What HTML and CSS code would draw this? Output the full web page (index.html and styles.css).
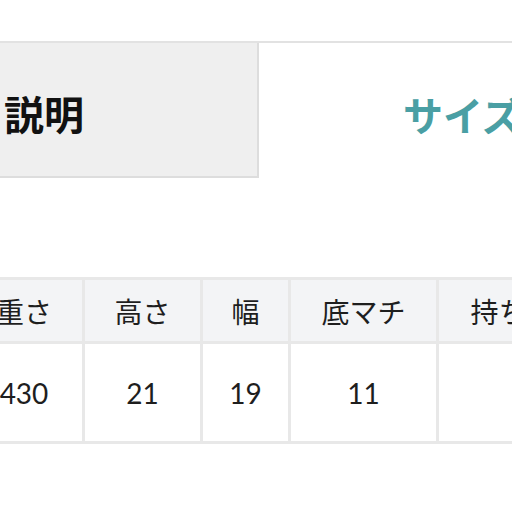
FILE: index.html
```html
<!DOCTYPE html>
<html lang="ja">
<head>
<meta charset="utf-8">
<link rel="stylesheet" href="styles.css">
</head>
<body>
<div class="page">
  <div class="tabs">
    <div class="tab tab-inactive"><span class="tab-label">説明</span></div>
    <div class="tab tab-active"><span class="tab-label">サイズ</span></div>
  </div>
  <table class="spec">
    <colgroup>
      <col class="c1"><col class="c2"><col class="c3"><col class="c4"><col class="c5">
    </colgroup>
    <thead>
      <tr><th>重さ</th><th>高さ</th><th>幅</th><th>底マチ</th><th>持ち手</th></tr>
    </thead>
    <tbody>
      <tr><td>430</td><td>21</td><td>19</td><td>11</td><td></td></tr>
    </tbody>
  </table>
</div>
</body>
</html>
```
FILE: styles.css
```css
html, body {
  margin: 0;
  padding: 0;
  background: #ffffff;
}
.page {
  width: 512px;
  height: 512px;
  overflow: hidden;
  font-family: Lato, "Noto Sans CJK JP", sans-serif;
  color: #222222;
}
.tabs {
  margin-top: 41px;
  display: flex;
  border-top: 2px solid #e2e2e2;
  height: 135px;
  width: 600px;
}
.tab {
  display: flex;
  align-items: center;
  box-sizing: border-box;
  white-space: nowrap;
}
.tab-inactive {
  width: 259px;
  background: #efefef;
  border-right: 2px solid #dddddd;
  border-bottom: 2px solid #dddddd;
  padding-left: 4px;
}
.tab-inactive .tab-label {
  font-family: "Noto Sans CJK JP", sans-serif;
  font-weight: 700;
  font-size: 40px;
  color: #111111;
  margin-top: 6px;
}
.tab-active {
  flex: 1;
  padding-left: 144px;
}
.tab-active .tab-label {
  font-family: "Noto Sans CJK JP", sans-serif;
  font-weight: 700;
  font-size: 40px;
  color: #4a9fa4;
  margin-top: 6px;
}
.spec {
  margin-top: 99px;
  margin-left: -37px;
  border-collapse: collapse;
  table-layout: fixed;
  width: 623px;
}
.c1 { width: 119px; }
.c2 { width: 118px; }
.c3 { width: 88px; }
.c4 { width: 148px; }
.c5 { width: 150px; }
.spec th, .spec td {
  border: 3px solid #e8e8e8;
  text-align: center;
  padding: 0;
  font-size: 28px;
  color: #1e1e1e;
}
.spec th {
  background: #f3f4f6;
  font-weight: 400;
  height: 61px;
  font-family: "Noto Sans CJK JP", sans-serif;
}
.spec td {
  background: #ffffff;
  height: 97px;
}
```
